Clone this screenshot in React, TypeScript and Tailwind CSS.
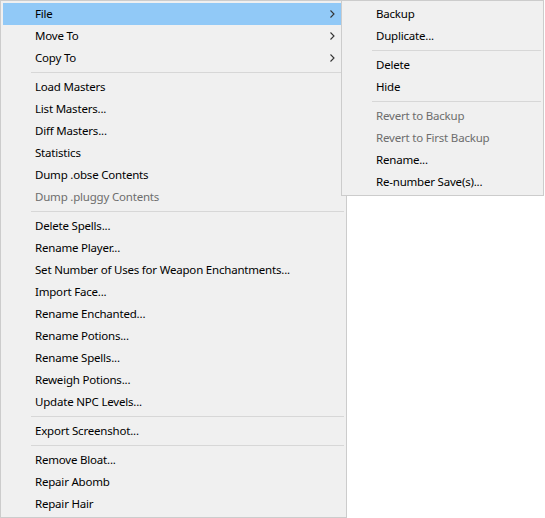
import React from 'react';

type Item =
  | { kind: 'item'; label: string; disabled?: boolean; submenu?: boolean; active?: boolean }
  | { kind: 'sep' };

const mainItems: Item[] = [
  { kind: 'item', label: 'File', submenu: true, active: true },
  { kind: 'item', label: 'Move To', submenu: true },
  { kind: 'item', label: 'Copy To', submenu: true },
  { kind: 'sep' },
  { kind: 'item', label: 'Load Masters' },
  { kind: 'item', label: 'List Masters...' },
  { kind: 'item', label: 'Diff Masters...' },
  { kind: 'item', label: 'Statistics' },
  { kind: 'item', label: 'Dump .obse Contents' },
  { kind: 'item', label: 'Dump .pluggy Contents', disabled: true },
  { kind: 'sep' },
  { kind: 'item', label: 'Delete Spells...' },
  { kind: 'item', label: 'Rename Player...' },
  { kind: 'item', label: 'Set Number of Uses for Weapon Enchantments...' },
  { kind: 'item', label: 'Import Face...' },
  { kind: 'item', label: 'Rename Enchanted...' },
  { kind: 'item', label: 'Rename Potions...' },
  { kind: 'item', label: 'Rename Spells...' },
  { kind: 'item', label: 'Reweigh Potions...' },
  { kind: 'item', label: 'Update NPC Levels...' },
  { kind: 'sep' },
  { kind: 'item', label: 'Export Screenshot...' },
  { kind: 'sep' },
  { kind: 'item', label: 'Remove Bloat...' },
  { kind: 'item', label: 'Repair Abomb' },
  { kind: 'item', label: 'Repair Hair' },
];

const fileItems: Item[] = [
  { kind: 'item', label: 'Backup' },
  { kind: 'item', label: 'Duplicate...' },
  { kind: 'sep' },
  { kind: 'item', label: 'Delete' },
  { kind: 'item', label: 'Hide' },
  { kind: 'sep' },
  { kind: 'item', label: 'Revert to Backup', disabled: true },
  { kind: 'item', label: 'Revert to First Backup', disabled: true },
  { kind: 'item', label: 'Rename...' },
  { kind: 'item', label: 'Re-number Save(s)...' },
];

function Chevron() {
  return (
    <svg width="5" height="8" viewBox="0 0 5 8" className="shrink-0">
      <path d="M0.5 0.5 L4 4 L0.5 7.5" fill="none" stroke="#333" strokeWidth="1.1" />
    </svg>
  );
}

function MenuRows({ items }: { items: Item[] }) {
  return (
    <>
      {items.map((it, i) =>
        it.kind === 'sep' ? (
          <div key={i} className="h-[7px] flex items-center pl-[28px]">
            <div className="h-px w-full bg-[#d7d7d7]" />
          </div>
        ) : (
          <div
            key={i}
            className={`h-[22px] flex items-center pl-[32px] pr-[9px] leading-[22px] ${
              it.active ? 'bg-[#91c9f7]' : ''
            } ${it.disabled ? 'text-[#6d6d6d]' : 'text-black'}`}
          >
            <span className="flex-1 whitespace-nowrap">{it.label}</span>
            {it.submenu && <Chevron />}
          </div>
        )
      )}
    </>
  );
}

export default function App() {
  return (
    <div className="relative w-[545px] h-[518px] bg-white text-[11.5px] tracking-[-0.2px] font-['Noto_Sans',sans-serif]">
      <div className="w-[347px] h-[518px] border border-[#cccccc] bg-[#f0f0f0] p-[2px]">
        <MenuRows items={mainItems} />
      </div>
      <div className="absolute left-[341px] top-0 w-[203px] h-[196px] border border-[#cccccc] bg-[#f0f0f0] p-[2px]">
        <MenuRows items={fileItems} />
      </div>
    </div>
  );
}
